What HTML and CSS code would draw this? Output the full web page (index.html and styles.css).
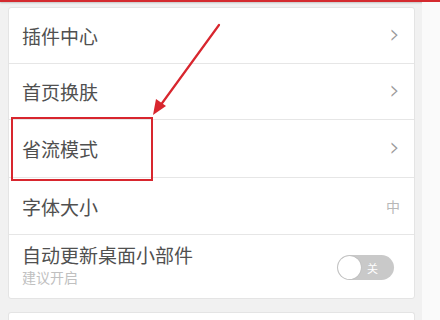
FILE: index.html
```html
<!DOCTYPE html>
<html lang="zh">
<head>
<meta charset="utf-8">
<link rel="stylesheet" href="styles.css">
</head>
<body>
<div class="topline"></div>
<div class="page">
  <div class="main">
    <div class="card">
      <div class="row"><span class="label">插件中心</span><span class="chev">›</span></div>
      <div class="row"><span class="label">首页换肤</span><span class="chev">›</span></div>
      <div class="row r3"><span class="label">省流模式</span><span class="chev">›</span></div>
      <div class="row r4"><span class="label">字体大小</span><span class="value">中</span></div>
      <div class="row r5">
        <div class="stack"><span class="label">自动更新桌面小部件</span><span class="sub">建议开启</span></div>
        <div class="toggle"><span class="knob"></span><span class="tt">关</span></div>
      </div>
    </div>
    <div class="card card2"></div>
  </div>
  <div class="side"></div>
</div>
<div class="hlbox"></div>
<svg class="arrow" width="440" height="320" viewBox="0 0 440 320">
  <line x1="219" y1="25" x2="160" y2="106" stroke="#d8262e" stroke-width="2.2" stroke-linecap="round"/>
  <polygon points="153,115 156,99 166,106" fill="#d8262e"/>
</svg>
</body>
</html>
```
FILE: styles.css
```css
html, body { margin: 0; padding: 0; }
body {
  width: 440px; height: 320px; overflow: hidden;
  background: #f1f1f1;
  font-family: "Noto Sans CJK SC", "Noto Sans", sans-serif;
  position: relative;
}
.topline { height: 2px; background: #d42a2f; box-shadow: 0 1px 2px rgba(0,0,0,0.2); }
.page { display: flex; }
.main { padding: 5px 0 0 8px; width: 407px; }
.side { margin-left: 7px; flex: 1; height: 318px; background: #fafafa; }
.card { background: #fff; border: 1px solid #e4e4e4; border-radius: 3px; }
.row {
  height: 55px; display: flex; align-items: center; justify-content: space-between;
  padding: 0 14px 0 13px; border-bottom: 1px solid #e6e6e6;
}
.r3 { height: 57px; }
.r4 { height: 56px; }
.r5 { height: 63px; border-bottom: none; }
.label { font-size: 19px; color: #505050; }
.chev { font-size: 26px; color: #9a9a9a; line-height: 1; margin-top: -4px; font-family: "DejaVu Sans", sans-serif; font-weight: 300; }
.value { font-size: 14px; color: #b8b8b8; }
.stack { display: flex; flex-direction: column; margin-top: -3px; }
.stack .label { line-height: 24px; }
.sub { font-size: 14px; color: #c0c0c0; line-height: 20px; }
.toggle {
  width: 57px; height: 25px; border-radius: 13px; background: #c9c9c9;
  position: relative; display: flex; align-items: center; justify-content: flex-end;
  margin-right: 6px; margin-top: 2px;
}
.knob {
  position: absolute; left: 1px; top: 1px; width: 23px; height: 23px; border-radius: 50%;
  background: #fff; box-shadow: 0 0 1px rgba(0,0,0,0.3);
}
.tt { font-size: 11px; color: #fff; margin-right: 16px; }
.card2 { margin-top: 13px; height: 20px; border-bottom: none; }
.hlbox {
  position: absolute; left: 11px; top: 117px; width: 138px; height: 60px;
  border: 2px solid #d8262e;
}
.arrow { position: absolute; left: 0; top: 0; }
```
